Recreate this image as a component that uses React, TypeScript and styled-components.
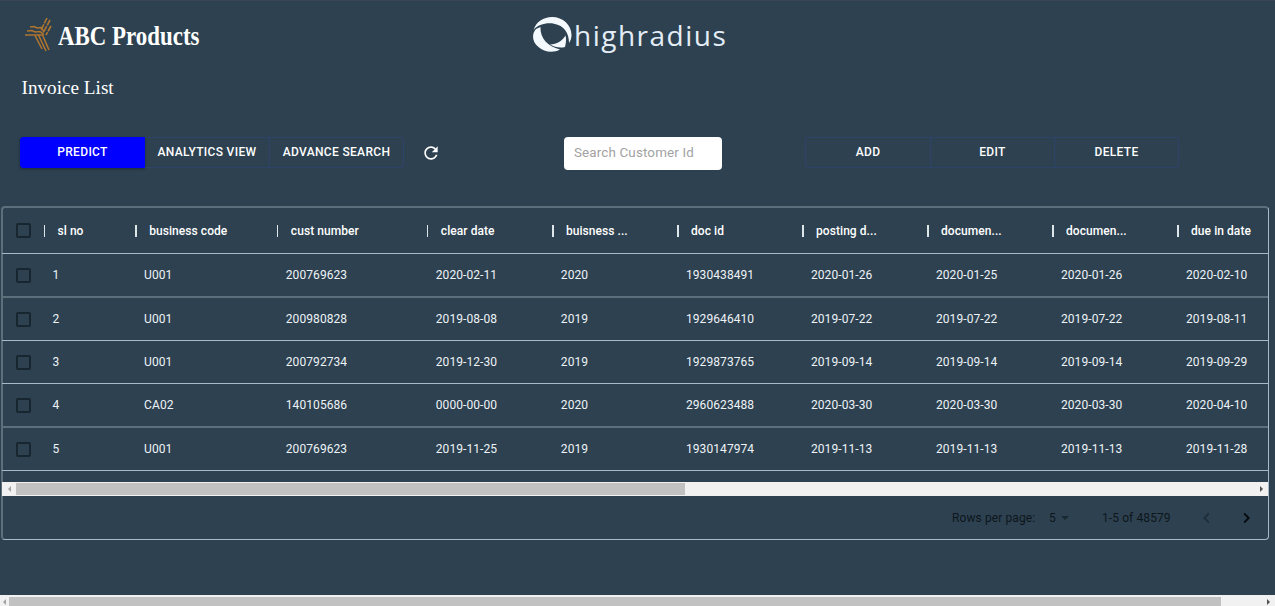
import React from "react";
import styled, { createGlobalStyle } from "styled-components";

const LINE = "#a9bac6";
const LINE_SOFT = "#5d6f7b";

const GlobalStyle = createGlobalStyle`
  * { box-sizing: border-box; }
  html, body { margin: 0; background: #2d4150; overflow: hidden; }
  body { font-family: Roboto, "Liberation Sans", sans-serif; color: #fff; }
  button { font-family: inherit; color: inherit; background: none; border: 0; padding: 0; margin: 0; }
`;

const Page = styled.div`
  height: 606px;
  width: 1275px;
  display: flex;
  flex-direction: column;
  background: #2d4150;
  border-top: 1px solid #3b4553;
`;

const Header = styled.header`
  display: flex;
  height: 70px;
  padding: 14px 0 0 24px;
`;

const Brand = styled.div`
  display: flex;
  width: 508px;
  height: 40px;
`;

const BrandName = styled.span`
  margin-left: 6px;
  font: bold 27px/43px "Liberation Serif", serif;
  transform: scaleX(0.848);
  transform-origin: 0 50%;
  white-space: nowrap;
`;

const Partner = styled.div`
  display: flex;
  height: 42px;
`;

const PartnerName = styled.span`
  margin-left: 1px;
  font: 400 28px/40px "Open Sans", sans-serif;
  letter-spacing: 1.5px;
  color: #e4edf6;
`;

const Title = styled.h1`
  margin: 0;
  padding: 4px 0 0 21.5px;
  height: 66px;
  font: 400 19.2px/25px "Liberation Serif", serif;
`;

const Toolbar = styled.div`
  display: flex;
  height: 69px;
  padding-left: 20px;
`;

const ButtonGroup = styled.div<{ $left?: number }>`
  display: flex;
  height: 31px;
  margin-left: ${(p) => p.$left ?? 0}px;
  border-radius: 3px;
`;

const ToolButton = styled.button<{ $width: number; $primary?: boolean }>`
  width: ${(p) => p.$width}px;
  height: 31px;
  padding-bottom: 2px;
  border: 1px solid ${(p) => (p.$primary ? "#0000ff" : "#2e4369")};
  background: ${(p) => (p.$primary ? "#0000ff" : "transparent")};
  box-shadow: ${(p) => (p.$primary ? "0 1px 3px rgba(0,0,0,.35)" : "none")};
  font-size: 12px;
  font-weight: 500;
  letter-spacing: 0.33px;
  white-space: nowrap;
  &:first-child { border-radius: 3px 0 0 3px; }
  &:last-child { border-radius: 0 3px 3px 0; }
  & + & { border-left-width: 0; }
`;

const Refresh = styled.button`
  display: flex;
  width: 20px;
  height: 20px;
  margin: 6px 0 0 17px;
`;

const Search = styled.input`
  width: 158px;
  height: 33px;
  margin-left: 123px;
  padding: 0 10px 2px;
  border: 0;
  border-radius: 4px;
  background: #fff;
  font: 400 13.4px Roboto, sans-serif;
  letter-spacing: 0.15px;
  &::placeholder { color: #a2a2a2; opacity: 1; }
`;

const Grid = styled.section`
  width: 1268px;
  height: 334px;
  margin-left: 1px;
  display: flex;
  flex-direction: column;
  border: 1px solid ${LINE};
  border-top: 2px solid ${LINE_SOFT};
  border-left: 2px solid ${LINE_SOFT};
  border-radius: 4px;
`;

const Row = styled.div<{ $height: number; $soft?: boolean }>`
  display: flex;
  flex-shrink: 0;
  align-items: center;
  height: ${(p) => p.$height}px;
  margin-left: -1px;
  padding-left: 0.6px;
  border-bottom: ${(p) => (p.$soft ? `2px solid ${LINE_SOFT}` : `1px solid ${LINE}`)};
`;

const CheckCell = styled.div`
  width: 41px;
  flex-shrink: 0;
  display: flex;
  padding-left: 13.4px;
`;

const CheckBox = styled.span`
  width: 15px;
  height: 15px;
  border: 2px solid #182630;
  border-radius: 2px;
`;

const Cell = styled.div<{ $width: number }>`
  width: ${(p) => p.$width}px;
  flex-shrink: 0;
  padding-left: 8.8px;
  font-size: 12px;
  letter-spacing: 0.08px;
  color: #eef3f7;
  white-space: nowrap;
`;

const HeadCell = styled.div<{ $width: number }>`
  width: ${(p) => p.$width}px;
  flex-shrink: 0;
  display: flex;
  align-items: center;
  font-size: 12px;
  font-weight: 500;
  letter-spacing: 0.06px;
  white-space: nowrap;
  &::before {
    content: "";
    width: 1.5px;
    height: 12px;
    margin-right: 12.4px;
    background: #dfe6ea;
  }
`;

const ScrollTrack = styled.div<{ $height: number; $inset?: boolean }>`
  display: flex;
  flex-shrink: 0;
  align-items: center;
  height: ${(p) => p.$height}px;
  margin-left: ${(p) => (p.$inset ? -1 : 0)}px;
  background: #f1f1f1;
`;

const Thumb = styled.div<{ $width: number; $height: number }>`
  width: ${(p) => p.$width}px;
  height: ${(p) => p.$height}px;
  background: #c1c1c1;
`;

const ScrollArrow = styled.span<{ $dir: "left" | "right"; $space: number }>`
  width: ${(p) => p.$space}px;
  display: flex;
  justify-content: center;
  margin-left: ${(p) => (p.$dir === "right" ? "auto" : "0")};
  &::before {
    content: "";
    border: 3px solid transparent;
    border-left: ${(p) => (p.$dir === "right" ? "3px solid #505050" : "0")};
    border-right: ${(p) => (p.$dir === "left" ? "3px solid #a3a3a3" : "0")};
  }
`;

const Filler = styled.div`
  height: 11px;
  flex-shrink: 0;
`;

const Footer = styled.footer`
  display: flex;
  align-items: center;
  justify-content: flex-end;
  height: 43px;
  padding-right: 14px;
  font-size: 12px;
  letter-spacing: 0.1px;
  color: #0e161c;
  white-space: nowrap;
`;

const RowsLabel = styled.span`
  width: 97px;
`;

const PageSize = styled.span`
  display: flex;
  align-items: center;
  width: 53px;
  gap: 5px;
`;

const Caret = styled.i`
  border: 4px solid transparent;
  border-top-color: #1a2832;
  border-bottom: 0;
`;

const Range = styled.span`
  width: 97px;
`;

const Pager = styled.button<{ $off?: boolean }>`
  display: flex;
  width: 16px;
  color: ${(p) => (p.$off ? "#1f2e39" : "#060b0f")};
  & + & { margin-left: 23px; }
`;

const PageScroll = styled.div`
  margin-top: auto;
  overflow: hidden;
  height: 11px;
`;

const columns: [string, number][] = [
  ["sl no", 91.7],
  ["business code", 141.7],
  ["cust number", 150],
  ["clear date", 125.1],
  ["buisness ...", 125.1],
  ["doc id", 125],
  ["posting d...", 125],
  ["documen...", 125],
  ["documen...", 125],
  ["due in date", 90],
];

const rows = [
  ["1", "U001", "200769623", "2020-02-11", "2020", "1930438491", "2020-01-26", "2020-01-25", "2020-01-26", "2020-02-10"],
  ["2", "U001", "200980828", "2019-08-08", "2019", "1929646410", "2019-07-22", "2019-07-22", "2019-07-22", "2019-08-11"],
  ["3", "U001", "200792734", "2019-12-30", "2019", "1929873765", "2019-09-14", "2019-09-14", "2019-09-14", "2019-09-29"],
  ["4", "CA02", "140105686", "0000-00-00", "2020", "2960623488", "2020-03-30", "2020-03-30", "2020-03-30", "2020-04-10"],
  ["5", "U001", "200769623", "2019-11-25", "2019", "1930147974", "2019-11-13", "2019-11-13", "2019-11-13", "2019-11-28"],
];

const rowShape = [
  { height: 44, soft: true },
  { height: 43 },
  { height: 43 },
  { height: 44, soft: true },
  { height: 43 },
];

const BrandMark = () => (
  <svg width="28" height="40" viewBox="0 0 28 40" fill="none" stroke="#b0752f" strokeWidth="1.6">
    <path d="M23 3 L17 15 M26 5 L19 18 M27 11 L22 20" strokeDasharray="6 1" />
    <path d="M6 12 L10 11.5 L13 13 L17 12.5 L20 17 M3 16 L8 15.5 L11 17 L16 16.5 L20 20 M1 20 L18 20" />
    <path d="M11 20.5 L18 34 M14.5 20 L22 36 M18.5 20 L25 35" />
  </svg>
);

const PartnerMark = () => (
  <svg width="41" height="42" viewBox="0 0 41 42" fill="#f4f9fd">
    <path d="M1.5 15 C4 7 11.5 2 20 2 C31 2 39.5 10 39.5 20 C39.5 23 38.5 26 37 28 C37 18 32 10.5 22 8.7 C14 7.5 6 9.5 1.5 15 Z" />
    <path d="M8.5 12 C8 23 15 31.5 28 34.5 C22 38 12 37.5 6.5 32 C0 27 -0.5 19 4 14 Z" />
    <path d="M33.5 20.5 C34.5 24 34 28 33 32 C28 33.5 22.5 32 18 29.5 C25 29 30 26 33.5 20.5 Z" />
  </svg>
);

const Chevron = ({ left }: { left?: boolean }) => (
  <svg width="16" height="16" viewBox="0 0 16 16" fill="none" stroke="currentColor" strokeWidth="1.8">
    <path d={left ? "M9.8 3.5 L5.3 8 L9.8 12.5" : "M6.2 3.5 L10.7 8 L6.2 12.5"} />
  </svg>
);

export default function App() {
  return (
    <Page>
      <GlobalStyle />
      <Header>
        <Brand>
          <BrandMark />
          <BrandName>ABC Products</BrandName>
        </Brand>
        <Partner>
          <PartnerMark />
          <PartnerName>highradius</PartnerName>
        </Partner>
      </Header>
      <Title>Invoice List</Title>
      <Toolbar>
        <ButtonGroup>
          <ToolButton $width={125} $primary>PREDICT</ToolButton>
          <ToolButton $width={125}>ANALYTICS VIEW</ToolButton>
          <ToolButton $width={134}>ADVANCE SEARCH</ToolButton>
        </ButtonGroup>
        <Refresh aria-label="Refresh">
          <svg width="20" height="20" viewBox="0 0 24 24" fill="#fff">
            <path d="M17.65 6.35C16.2 4.9 14.21 4 12 4c-4.42 0-7.99 3.58-7.99 8s3.57 8 7.99 8c3.73 0 6.84-2.55 7.73-6h-2.08c-.82 2.33-3.04 4-5.65 4-3.31 0-6-2.69-6-6s2.69-6 6-6c1.66 0 3.14.69 4.22 1.78L13 11h7V4l-2.35 2.35z" />
          </svg>
        </Refresh>
        <Search placeholder="Search Customer Id" />
        <ButtonGroup $left={83}>
          <ToolButton $width={126}>ADD</ToolButton>
          <ToolButton $width={124}>EDIT</ToolButton>
          <ToolButton $width={124}>DELETE</ToolButton>
        </ButtonGroup>
      </Toolbar>
      <Grid>
        <Row $height={46}>
          <CheckCell><CheckBox /></CheckCell>
          {columns.map(([label, width], i) => (
            <HeadCell key={i} $width={width}>{label}</HeadCell>
          ))}
        </Row>
        {rows.map((row, r) => (
          <Row key={r} $height={rowShape[r].height} $soft={rowShape[r].soft}>
            <CheckCell><CheckBox /></CheckCell>
            {row.map((value, i) => (
              <Cell key={i} $width={columns[i][1]}>{value}</Cell>
            ))}
          </Row>
        ))}
        <Filler />
        <ScrollTrack $height={14} $inset>
          <ScrollArrow $dir="left" $space={14} />
          <Thumb $width={669} $height={12} />
          <ScrollArrow $dir="right" $space={13} />
        </ScrollTrack>
        <Footer>
          <RowsLabel>Rows per page:</RowsLabel>
          <PageSize>5 <Caret /></PageSize>
          <Range>1-5 of 48579</Range>
          <Pager $off aria-label="Previous page"><Chevron left /></Pager>
          <Pager aria-label="Next page"><Chevron /></Pager>
        </Footer>
      </Grid>
      <PageScroll>
        <ScrollTrack $height={13}>
          <ScrollArrow $dir="left" $space={9} />
          <Thumb $width={1212} $height={10} />
          <ScrollArrow $dir="right" $space={13} />
        </ScrollTrack>
      </PageScroll>
    </Page>
  );
}
